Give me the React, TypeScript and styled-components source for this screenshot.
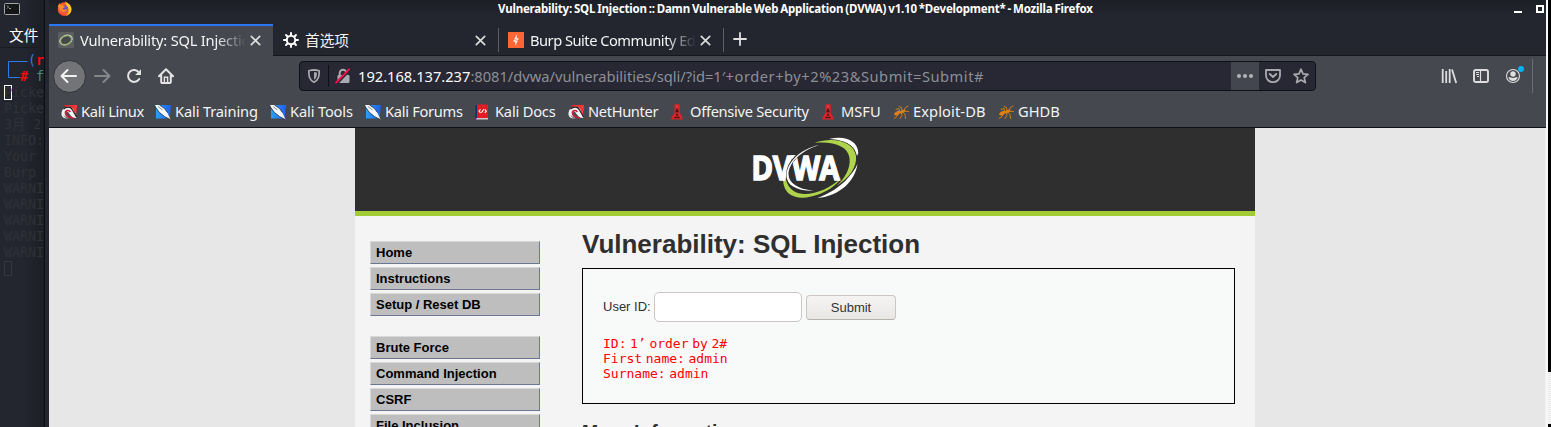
import React from 'react';
import styled, { createGlobalStyle } from 'styled-components';

const Global = createGlobalStyle`
  * { box-sizing: border-box; }
  body { margin: 0; overflow: hidden; background: #000; }
  svg { display: block; flex: none; }
`;

const ui = `'Noto Sans', 'Noto Sans CJK SC', sans-serif`;

const Screen = styled.div`
  display: flex;
  width: 1551px;
  height: 427px;
  overflow: hidden;
  font-family: ${ui};
`;

/* Terminal behind the browser */
const Terminal = styled.aside`
  flex: none;
  width: 45px;
  height: 427px;
  overflow: hidden;
  background: linear-gradient(90deg, #23262f 0, #23262f 24px, #1c1e25 44px);
  border-right: 1px solid #0b0c10;
`;
const TermTitle = styled.div`
  height: 24px;
  padding: 3px 0 0 4px;
`;
const TermMenu = styled.div`
  height: 24px;
  border-bottom: 1px solid #1a1c22;
  padding-left: 9px;
  font-size: 14.67px;
  line-height: 23px;
  color: #fff;
  white-space: nowrap;
`;
const Prompt = styled.div`
  height: 37px;
  padding: 5px 0 0 7px;
  display: flex;
  svg { margin-top: 7px; }
`;
const PromptText = styled.div<{ $back?: number }>`
  margin-left: ${p => -(p.$back ?? 0)}px;
  font: 13.3px/16px 'DejaVu Sans Mono', monospace;
  white-space: pre;
`;
const Blue = styled.span`color: #2f7bea;`;
const Red = styled.b`color: #f50a0a;`;
const Teal = styled.span`color: #3e8e83;`;
const TermLine = styled.div`
  height: 16px;
  padding-left: 4px;
  font: 13.3px/16px 'DejaVu Sans Mono', 'Noto Sans CJK SC', monospace;
  color: #2e3139;
  white-space: pre;
`;
const Cursor = styled.span<{ $color: string; $over?: boolean }>`
  display: block;
  width: 8px;
  height: 15px;
  margin-right: ${p => (p.$over ? '-8px' : 0)};
  border: 1px solid ${p => p.$color};
`;
const CursorLine = styled(TermLine)`display: flex;`;

/* Browser window */
const Window = styled.main`
  flex: none;
  width: 1503px;
  height: 427px;
  border-left: 4px solid #242630;
  border-right: 2px solid #f7f7f7;
  display: flex;
  flex-direction: column;
`;
const TitleBar = styled.header`
  height: 24px;
  flex: none;
  display: flex;
  background: linear-gradient(#1c1e26, #23262f 16px);
  padding-left: 8px;
`;
const WindowTitle = styled.div`
  flex: 1;
  padding-left: 426px;
  font-weight: 700;
  font-size: 11.5px;
  line-height: 18px;
  letter-spacing: -0.2px;
  word-spacing: -0.8px;
  color: #fff;
  white-space: nowrap;
`;
const TabBar = styled.div`
  height: 32px;
  flex: none;
  display: flex;
  background: #23262f;
`;
const Tab = styled.div<{ $active?: boolean }>`
  width: ${p => (p.$active ? 224 : 225)}px;
  height: 32px;
  display: flex;
  align-items: center;
  padding: 0 0 ${p => (p.$active ? 2 : 1)}px 9px;
  background: ${p => (p.$active ? '#45484f' : 'transparent')};
  border-top: 2px solid ${p => (p.$active ? '#2b76f5' : 'transparent')};
  border-bottom: ${p => (p.$active ? 'none' : '1px solid #15161b')};
`;
const TabText = styled.span<{ $fade?: boolean; $ls?: number }>`
  width: 165px;
  margin-left: 6px;
  overflow: hidden;
  font-size: 14.67px;
  line-height: 22px;
  padding-bottom: 1px;
  letter-spacing: ${p => p.$ls ?? 0}px;
  white-space: nowrap;
  color: #f4f4f4;
  ${p => p.$fade && 'mask-image: linear-gradient(90deg, #000 136px, transparent 166px);'}
`;
const Divider = styled.div<{ $h: number; $c: string }>`
  flex: none;
  width: 1px;
  height: ${p => p.$h}px;
  background: ${p => p.$c};
`;
const TabDivider = styled(Divider)<{ $back?: number }>`
  margin: 4px 0 0 ${p => -(p.$back ?? 0)}px;
`;
const TabEnd = styled.div`
  flex: 1;
  border-bottom: 1px solid #15161b;
  padding: 8px 0 0 9px;
`;
const NavBar = styled.nav`
  height: 41px;
  flex: none;
  display: flex;
  align-items: center;
  background: #45484f;
  padding: 0 13px 1px 4px;
`;
const BackButton = styled.div`
  width: 33px;
  height: 33px;
  border-radius: 50%;
  background: #737478;
  border: 1px solid #303238;
  display: grid;
  place-items: center;
  padding-right: 2px;
`;
const NavIcon = styled.div<{ $l: number }>`margin-left: ${p => p.$l}px;`;
const UrlBar = styled.div`
  width: 1017px;
  height: 30px;
  margin-left: 125px;
  display: flex;
  align-items: center;
  background: #272833;
  border: 1px solid #101116;
  border-radius: 4px;
  padding-left: 6px;
`;
const UrlText = styled.span`
  width: 873px;
  margin-left: 7px;
  font-size: 14.67px;
  line-height: 24px;
  color: #8e8f96;
  white-space: nowrap;
  b { color: #fbfbfe; font-weight: 400; }
`;
const Query = styled.span`letter-spacing: 0.53px;`;
const PageActions = styled.div`
  width: 28px;
  height: 28px;
  background: #43464e;
  display: grid;
  place-items: center;
  margin-right: 6px;
`;
const Bookmarks = styled.div`
  height: 31px;
  flex: none;
  display: flex;
  align-items: center;
  padding: 0 0 1px 12px;
  background: #45484f;
  border-bottom: 1px solid #101116;
`;
const Bookmark = styled.div<{ $w: number; $ls?: number }>`
  width: ${p => p.$w}px;
  flex: none;
  display: flex;
  align-items: center;
  gap: 4px;
  font-size: 14.67px;
  line-height: 22px;
  letter-spacing: ${p => p.$ls ?? 0}px;
  color: #f4f4f4;
  white-space: nowrap;
  span { padding-bottom: 1px; }
`;

/* Web page */
const Viewport = styled.div`
  height: 299px;
  overflow: hidden;
  background: #e7e7e7;
  padding-left: 306px;
  border-right: 1px solid #f0f0f0;
`;
const Page = styled.div`
  width: 900px;
  background: #f4f4f4;
  font: 13px/15px 'Liberation Sans', Arial, sans-serif;
  color: #2f2f2f;
`;
const Header = styled.div`
  height: 88px;
  background: #2f2f2f;
  border-bottom: 5px solid #a1cc33;
  padding: 8px 0 0 395px;
`;
const Columns = styled.div`display: flex;`;
const Menu = styled.div`
  width: 227px;
  padding: 25px 0 0 15px;
`;
const Group = styled.div`margin-bottom: 20px;`;
const MenuItem = styled.div`
  width: 170px;
  height: 23px;
  margin-bottom: 3px;
  padding-left: 5px;
  background: #bebebe;
  border: 1px solid;
  border-color: #d8d8d8 #6b7893 #6b7893 #d8d8d8;
  font-weight: 700;
  line-height: 21px;
  color: #000;
`;
const Content = styled.div`width: 653px;`;
const Heading = styled.h1`
  margin: 0;
  height: 52px;
  padding-top: 13px;
  font-size: 26px;
  line-height: 30px;
`;
const Panel = styled.section`
  height: 136px;
  background: #f8fafa;
  border: 1px solid #000;
  padding: 23px 20px 0;
`;
const Form = styled.div`
  height: 30px;
  display: flex;
  align-items: center;
  white-space: nowrap;
`;
const Label = styled.label`
  width: 51px;
  padding-bottom: 2px;
`;
const Field = styled.input`
  width: 148px;
  height: 30px;
  margin: 0 4px 0 0;
  border: 1px solid #cbc6c2;
  border-radius: 5px;
  background: #fff;
`;
const Submit = styled.button`
  width: 90px;
  height: 25px;
  margin: 0;
  padding: 0;
  font: 13px/15px 'Liberation Sans', Arial, sans-serif;
  color: #2e3436;
  border: 1px solid #cbc6c2;
  border-bottom-color: #b8b2ad;
  border-radius: 4px;
  background: linear-gradient(#f5f4f3, #e9e7e6);
`;
const Result = styled.pre`
  margin: 14px 0 0;
  font: 13px/15px 'DejaVu Sans Mono', monospace;
  word-spacing: -4.2px;
  color: #f00;
`;
const SubHeading = styled.h2`
  margin: 17px 0 0;
  font-size: 19.5px;
  line-height: 22px;
`;

const Edge = styled.div`
  width: 3px;
  display: flex;
  flex-direction: column;
  background: #000;
`;
const EdgeLines = styled.div`
  margin-top: 372px;
  height: 52px;
  background: repeating-linear-gradient(#fafafa 0 1px, #e6e6e6 1px 2px);
`;

/* Icons */
const FirefoxIcon = () => (
  <svg width="15" height="16" viewBox="0 -1 15 16">
    <circle cx="7.500" cy="8" r="6.800" fill="#ff5a2c" />
    <path d="M8.500 0c.4 2 5.900 3 6 8 0 4-3 6.700-6.500 6.900 3-1.500 4-4 3.500-6.500C11 5.500 8 4 8.500 0z" fill="#ffc928" />
    <circle cx="7.400" cy="7.800" r="3.500" fill="#7650c8" />
    <path d="M.8 6C1 4 2 3 2.700 2.200 3 4 5 4 6.500 4.400L8 6 5.500 7.200c.5 2 3.500 2 4.800.8-.3 3-4 4-6.300 2C2.500 9 2.500 6.500.8 6z" fill="#ff8b25" />
    <path d="M1 9c1 4.500 5 6 9 5-2 1.500-8 1.300-9-5z" fill="#f5265b" />
  </svg>
);
const Close = () => (
  <svg width="11" height="11" viewBox="0 0 11 11" stroke="#dcdcdc" strokeWidth="1.700" strokeLinecap="round">
    <path d="M1.300 1.300l8.400 8.400M9.700 1.300L1.300 9.700" />
  </svg>
);
const DvwaFavicon = () => (
  <svg width="16" height="16" viewBox="0 0 16 16">
    <rect width="16" height="16" rx="1" fill="#5b5d60" />
    <g fill="none" transform="rotate(-24 8 8)">
      <ellipse cx="8" cy="8" rx="6.500" ry="4.500" stroke="#dfe3da" strokeWidth="1" />
      <ellipse cx="8" cy="8.300" rx="5.800" ry="4.300" stroke="#98b35e" strokeWidth="1.100" />
    </g>
    <ellipse cx="7.800" cy="8" rx="4.500" ry="3" fill="#45484b" transform="rotate(-24 8 8)" />
  </svg>
);
const Gear = () => (
  <svg width="16" height="16" viewBox="0 0 16 16" stroke="#fff" fill="none">
    <circle cx="8" cy="8" r="4.200" strokeWidth="2" />
    <path strokeWidth="2" strokeLinecap="round" d="M8 1v2M8 13v2M1 8h2M13 8h2M3.050 3.050l1.400 1.400M11.550 11.550l1.400 1.400M3.050 12.950l1.400-1.400M11.550 4.450l1.400-1.400" />
  </svg>
);
const BurpIcon = () => (
  <svg width="16" height="16" viewBox="0 0 16 16">
    <rect width="16" height="16" fill="#ff6633" />
    <path d="M8.700 2.200v4.300h2.100L7.300 13.800V9.400H5.100z" fill="#fff" />
    <path d="M5 7.300l6 1.400" stroke="#ff6633" strokeWidth=".8" />
  </svg>
);
const Arrow = ({ color, flip }: { color: string; flip?: boolean }) => (
  <svg width="17" height="16" viewBox="0 0 17 16" fill="none" stroke={color} strokeWidth="2" strokeLinecap="round" strokeLinejoin="round">
    <path d={flip ? 'M1 8h14.500M9.500 2l6 6-6 6' : 'M16 8H1.500M7.500 2l-6 6 6 6'} />
  </svg>
);
const Reload = () => (
  <svg width="16" height="16" viewBox="0 0 16 16">
    <path d="M13.200 11A6 6 0 1 1 13 4.500" fill="none" stroke="#e4e4e4" strokeWidth="2" strokeLinecap="round" />
    <path d="M15 1.200v5.300a.5.500 0 0 1-.5.500H9.200z" fill="#e4e4e4" />
  </svg>
);
const Home = () => (
  <svg width="16" height="16" viewBox="0 0 16 16">
    <path d="M1 8.300L8 1.300l7 7M3.200 7v7a1 1 0 0 0 1 1h7.600a1 1 0 0 0 1-1V7" fill="none" stroke="#e4e4e4" strokeWidth="2" strokeLinecap="round" strokeLinejoin="round" />
    <path d="M6.400 14V9.200h3.200V14" fill="none" stroke="#e4e4e4" strokeWidth="1.400" />
  </svg>
);
const Shield = () => (
  <svg width="16" height="16" viewBox="0 0 16 16">
    <path d="M8 1.900c2 .1 3.500.400 5.200.9 0 5-.3 9.200-5.200 11.400C3.100 12 2.800 7.800 2.800 2.800 4.500 2.300 6 2 8 1.900z" fill="none" stroke="#a9aaaf" strokeWidth="1.700" strokeLinejoin="round" />
    <path d="M8 4.300c1.100 0 2 .1 2.900.4 0 3-.3 5.400-2.900 7z" fill="#a9aaaf" />
  </svg>
);
const Lock = () => (
  <svg width="16" height="16" viewBox="0 0 16 16">
    <path d="M4.700 8V5a3.300 3.300 0 0 1 6.600 0v3" fill="none" stroke="#a9aaaf" strokeWidth="2" />
    <rect x="2.500" y="7" width="12" height="8" rx="1.300" fill="#a9aaaf" />
    <path d="M1.500 16L15 1.700" stroke="#272833" strokeWidth="2.500" />
    <path d="M1.200 14.500L14 1.300" stroke="#f4124c" strokeWidth="1.900" strokeLinecap="round" />
  </svg>
);
const Pocket = () => (
  <svg width="16" height="16" viewBox="0 0 16 16" fill="none" stroke="#a9aaaf" strokeWidth="1.800" strokeLinecap="round" strokeLinejoin="round">
    <path d="M1 2h14v5.500a7 6.700 0 0 1-14 0z" />
    <path d="M4.800 6L8 9l3.200-3" strokeWidth="2" />
  </svg>
);
const Star = () => (
  <svg width="16" height="16" viewBox="0 0 16 16" fill="none" stroke="#a9aaaf" strokeWidth="1.700" strokeLinejoin="round">
    <path d="M8 1.200l2 4.600 5 .5-3.800 3.300 1.200 5L8 12l-4.400 2.600 1.200-5L1 6.300l5-.5z" />
  </svg>
);
const Library = () => (
  <svg width="16" height="16" viewBox="0 0 16 16" stroke="#dedede" strokeWidth="1.800">
    <path d="M1.700 1v14M5.200 3v12M8.700 1v14M11 1.500L15.200 15" />
  </svg>
);
const Sidebar = () => (
  <svg width="16" height="16" viewBox="0 0 16 16" fill="none" stroke="#dedede">
    <rect x="1" y="2" width="14" height="12" rx="1.800" strokeWidth="1.900" />
    <path d="M7.500 2v12" strokeWidth="1.200" />
    <path d="M3 4.500h3M3 6.500h3M4 8.500h2" strokeWidth="1" />
  </svg>
);
const Account = () => (
  <svg width="20" height="20" viewBox="0 0 20 20">
    <circle cx="8" cy="10" r="6.500" fill="none" stroke="#dedede" strokeWidth="1.100" />
    <circle cx="8" cy="8" r="2.700" fill="#dedede" />
    <path d="M3.400 11.200c1.200-.8 2.300.7 4.600.7s3.400-1.500 4.600-.7c-.5 2-2.300 3.800-4.600 3.800s-4.100-1.800-4.600-3.800z" fill="#dedede" />
    <circle cx="16" cy="3" r="3" fill="#00b3f4" />
  </svg>
);
const DragonIcon = ({ c1, c2, hook }: { c1: string; c2: string; hook?: boolean }) => (
  <svg width="16" height="16" viewBox="0 0 16 16">
    <defs>
      <linearGradient id={`g${c1.slice(1)}`}><stop stopColor={c1} /><stop offset="1" stopColor={c2} /></linearGradient>
    </defs>
    <path d={hook ? 'M3 1h13l-1 11-3 2z' : 'M1 1h15l-1.500 13.500H1z'} fill={`url(#g${c1.slice(1)})`} />
    {hook ? (
      <>
        <path d="M.5 10C.5 5 4 2.800 7.500 2.800c3.500 0 5 2.200 5.500 4.700l2.500 6.500-4-.5L8 9.500c-.5-2-3.500-2-3.500.500 0 2 1.500 3 3.500 4.500C4 15 .5 13.500.5 10z" fill="#f3f3f3" />
        <path d="M2.500 5.200C5 2.500 10 2 11.500 6l4 7" fill="none" stroke="#1d1d1f" strokeWidth="1.100" />
        <path d="M9.200 8c-1-2.500-5-1.600-4.700 1 .2 2 2 3.600 4 4.200L12 14" fill="none" stroke="#c91f3a" strokeWidth="1.700" />
        <path d="M3 11.500c1 1.800 2.500 2.500 4.500 2.800" fill="none" stroke="#333" strokeWidth=".8" />
      </>
    ) : (
      <>
        <path d="M0 1l4.500 0 5 3.500L12.500 9l3 6.500-6-3L4 8z" fill="#f6f6f6" />
        <path d="M4.500 1l5 3.500L12.500 8.500M.5 3.500L4.500 8.500l5 4 5.500 3" fill="none" stroke="#22324a" strokeWidth=".8" />
        <path d="M3 2.500L7.500 6" stroke="#56657a" strokeWidth=".7" />
      </>
    )}
  </svg>
);
const DocsIcon = () => (
  <svg width="16" height="16" viewBox="0 0 16 16">
    <path d="M.5 2L2.500.5v14l-2 .5z" fill="#172d63" />
    <path d="M2 .5h11v13.500H2z" fill="#e31b23" />
    <path d="M1.500 14h11.500v1.500H1z" fill="#d9c5c7" />
    <path d="M5.500 5.300L4 7.200l1.500 1.600M9.800 5.300l1.500 1.900-1.500 1.600M8.800 5.200l-2.400 3.600" fill="none" stroke="#fff" strokeWidth="1.100" />
  </svg>
);
const SwordIcon = () => (
  <svg width="16" height="16" viewBox="0 0 16 16">
    <path d="M4.500.3h5.300V9l1.700 2.500 1.500 4H1l1.500-4L4.500 9z" fill="#d8232a" />
    <path d="M7 1v14" stroke="#f0474b" strokeWidth="1" />
    <path d="M7 4.500v4M5.500 7.500h3M7 9.500v2.500M4.500 13.500h5" stroke="#4a0d12" strokeWidth="1.600" />
  </svg>
);
const BugIcon = () => (
  <svg width="16" height="16" viewBox="0 0 16 16" fill="none" stroke="#e08018" strokeLinecap="round">
    <ellipse cx="4.200" cy="9.200" rx="3.300" ry="1.800" fill="#e08018" stroke="none" transform="rotate(-30 4.200 9.200)" />
    <ellipse cx="9.500" cy="7.500" rx="3.200" ry="1.400" fill="#e08018" stroke="none" transform="rotate(-25 9.500 7.500)" />
    <path d="M7 8.500L6 4.500 3 5.500M9 7l-.5-3.500L6 2.500M11 6.500l1.500-3L15 2M8.500 9l.5 2.500-2 3M10.500 8.500l1.500 2 .5 4M12 7.300l3.500.2M5.500 10L4 12.500l-3 2" strokeWidth=".9" />
  </svg>
);
const DvwaLogo = () => (
  <svg width="112" height="66" viewBox="0 0 112 66">
    <path d="M79 3C94-1 108 4 108.300 17L107 20C105 10 97 4 79 3z" fill="#fff" />
    <path d="M107.500 28C105 45 90 60 67.500 62 79 58 91 50 97 43c4-5 8-9 10.500-15z" fill="#fff" />
    <path d="M64.500 6.700C85 0 104 6 106 20c1.200 11-7 22-19.500 30C94 43 101 33 99.500 22 98 10 84 5 64.500 6.700z" fill="#b0d34c" />
    <path d="M33 44h3c3 10 10 14 19 14 12 0 27-7 36-16-3 6-12 12-20 15.500-20 8-37 5-38-13.500z" fill="#b0d34c" />
    <text x="1.500" y="44" textLength="88" lengthAdjust="spacingAndGlyphs" fontFamily="Noto Sans, sans-serif" fontWeight="700" fontSize="33.500" fill="#fff" stroke="#fff" strokeWidth="1.400">DVWA</text>
    <path d="M67 9.500C50 14 37.500 26 37.500 39c0 9 9 15 26 15.700" fill="none" stroke="#2f2f2f" strokeWidth="2.800" />
    <path d="M69 9C50 15 39 27 38.500 38c0 9 9 15 25 16.700C46 55 36.500 49 36.500 39.500 36.500 27 50 13 69 9z" fill="#fff" />
  </svg>
);

const kaliRed = <DragonIcon c1="#e41e2f" c2="#ff3a36" hook />;
const kaliBlue = <DragonIcon c1="#2ca0f5" c2="#1d60f0" />;

const bookmarks: { label: string; w: number; icon: React.ReactNode; ls?: number }[] = [
  { label: 'Kali Linux', w: 94, icon: kaliRed, ls: -0.3 },
  { label: 'Kali Training', w: 115, icon: kaliBlue, ls: -0.15 },
  { label: 'Kali Tools', w: 95, icon: kaliBlue, ls: -0.15 },
  { label: 'Kali Forums', w: 110, icon: kaliBlue, ls: -0.3 },
  { label: 'Kali Docs', w: 93, icon: <DocsIcon />, ls: -0.2 },
  { label: 'NetHunter', w: 102, icon: kaliRed, ls: -0.35 },
  { label: 'Offensive Security', w: 151, icon: <SwordIcon />, ls: -0.3 },
  { label: 'MSFU', w: 72, icon: <SwordIcon /> },
  { label: 'Exploit-DB', w: 105, icon: <BugIcon />, ls: 0.1 },
  { label: 'GHDB', w: 80, icon: <BugIcon /> },
];

const termLines = ['Picke', '3月 2', 'INFO:', 'Your ', 'Burp ', 'WARNI', 'WARNI', 'WARNI', 'WARNI', 'WARNI'];

const menu = [
  ['Home', 'Instructions', 'Setup / Reset DB'],
  ['Brute Force', 'Command Injection', 'CSRF', 'File Inclusion'],
];

export default function App() {
  return (
    <Screen>
      <Global />
      <Terminal>
        <TermTitle>
          <svg width="16" height="12" viewBox="0 0 16 12">
            <rect x=".5" y=".5" width="15" height="11" rx="1" fill="#151617" stroke="#a5a6a8" />
            <path d="M3 2.500L4.500 4 3 5.500M5 5.500h2" stroke="#bbb" strokeWidth=".8" fill="none" />
          </svg>
        </TermTitle>
        <TermMenu>文件</TermMenu>
        <Prompt>
          <svg width="21" height="18" viewBox="0 0 21 18" fill="none" stroke="#2f7bea">
            <path d="M20.500 1.500H1.500v16H13" />
          </svg>
          <div>
            <PromptText><Blue>(</Blue><Red>r</Red></PromptText>
            <PromptText $back={8}><Red>#</Red> <Teal>f</Teal></PromptText>
          </div>
        </Prompt>
        <CursorLine>
          <Cursor $color="#fff" $over />
          Picke
        </CursorLine>
        {termLines.map((t, i) => <TermLine key={i}>{t}</TermLine>)}
        <CursorLine><Cursor $color="#343740" /></CursorLine>
      </Terminal>

      <Window>
        <TitleBar>
          <NavIcon $l={0}><FirefoxIcon /></NavIcon>
          <WindowTitle>Vulnerability: SQL Injection :: Damn Vulnerable Web Application (DVWA) v1.10 *Development* - Mozilla Firefox</WindowTitle>
          <svg width="34" height="18" viewBox="0 0 34 18">
            <path d="M2 11h8v2H2z" fill="#fff" />
            <path d="M25 6h6v6h-6z" fill="none" stroke="#fff" strokeWidth="2" />
          </svg>
        </TitleBar>
        <TabBar>
          <Tab $active>
            <DvwaFavicon />
            <TabText $fade $ls={-0.2}>Vulnerability: SQL Injection</TabText>
            <NavIcon $l={5}><Close /></NavIcon>
          </Tab>
          <Tab>
            <NavIcon $l={1}><Gear /></NavIcon>
            <TabText>首选项</TabText>
            <NavIcon $l={5}><Close /></NavIcon>
          </Tab>
          <TabDivider $h={24} $c="#5d5f66" />
          <Tab>
            <BurpIcon />
            <TabText $fade $ls={-0.5}>Burp Suite Community Edition</TabText>
            <NavIcon $l={5}><Close /></NavIcon>
          </Tab>
          <TabDivider $h={24} $c="#5d5f66" $back={1} />
          <TabEnd>
            <svg width="14" height="14" viewBox="0 0 14 14" stroke="#e0e0e0" strokeWidth="1.800" strokeLinecap="round">
              <path d="M7 1v12M1 7h12" />
            </svg>
          </TabEnd>
        </TabBar>
        <NavBar>
          <BackButton><Arrow color="#f2f2f2" /></BackButton>
          <NavIcon $l={8}><Arrow color="#85878b" flip /></NavIcon>
          <NavIcon $l={15}><Reload /></NavIcon>
          <NavIcon $l={16}><Home /></NavIcon>
          <UrlBar>
            <Shield />
            <NavIcon $l={6}><Divider $h={22} $c="#0f1015" /></NavIcon>
            <NavIcon $l={6}><Lock /></NavIcon>
            <UrlText><b>192.168.137.237</b>:8081/dvwa/vulnerabilities/sqli/?id=1<Query>′+order+by+2%23&amp;Submit=Submit#</Query></UrlText>
            <PageActions>
              <svg width="16" height="4" viewBox="0 0 16 4" fill="#b3b4b8">
                <circle cx="2" cy="2" r="2" /><circle cx="8" cy="2" r="2" /><circle cx="14" cy="2" r="2" />
              </svg>
            </PageActions>
            <Pocket />
            <NavIcon $l={12}><Star /></NavIcon>
          </UrlBar>
          <NavIcon $l={125}><Library /></NavIcon>
          <NavIcon $l={16}><Sidebar /></NavIcon>
          <NavIcon $l={16}><Account /></NavIcon>
          <NavIcon $l={7}><Divider $h={34} $c="#6c6e73" /></NavIcon>
        </NavBar>
        <Bookmarks>
          {bookmarks.map(b => <Bookmark key={b.label} $w={b.w} $ls={b.ls}>{b.icon}<span>{b.label}</span></Bookmark>)}
        </Bookmarks>
        <Viewport>
          <Page>
            <Header><DvwaLogo /></Header>
            <Columns>
              <Menu>
                {menu.map((g, i) => <Group key={i}>{g.map(m => <MenuItem key={m}>{m}</MenuItem>)}</Group>)}
              </Menu>
              <Content>
                <Heading>Vulnerability: SQL Injection</Heading>
                <Panel>
                  <Form>
                    <Label>User ID:</Label>
                    <Field />
                    <Submit>Submit</Submit>
                  </Form>
                  <Result>{'ID: 1’ order by 2#\nFirst name: admin\nSurname: admin'}</Result>
                </Panel>
                <SubHeading>More Information</SubHeading>
              </Content>
            </Columns>
          </Page>
        </Viewport>
      </Window>
      <Edge><EdgeLines /></Edge>
    </Screen>
  );
}
